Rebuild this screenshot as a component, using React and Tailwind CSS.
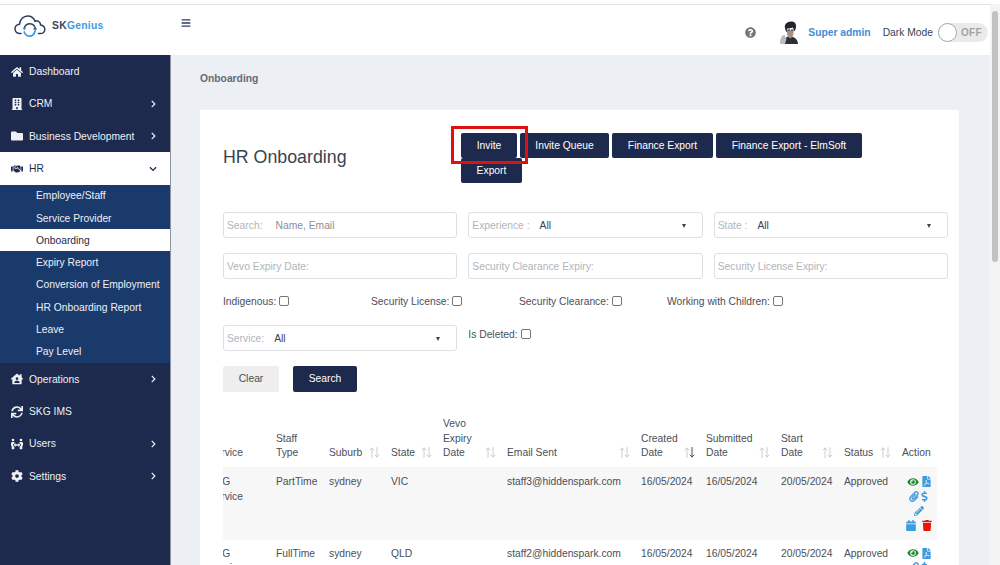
import {
  FaHome, FaBuilding, FaFolder, FaHandshake, FaHouseUser, FaSync, FaPeopleArrows, FaCog,
  FaChevronRight, FaChevronDown, FaBars, FaQuestionCircle, FaEye, FaFilePdf, FaPaperclip,
  FaDollarSign, FaPencilAlt, FaCalendar, FaTrash,
} from 'react-icons/fa';

const subItems = ['Employee/Staff', 'Service Provider', 'Onboarding', 'Expiry Report', 'Conversion of Employment', 'HR Onboarding Report', 'Leave', 'Pay Level'];

function Logo() {
  return (
    <svg width="32" height="24" viewBox="0 0 32 24" fill="none">
      <path d="M7 19.5H6C3 19.5 1 17.4 1 14.8C1 12.2 3 10.2 5.5 10.2C6 5.5 9.5 2 13.5 2C17 2 20 4.2 21 7.2C22 6.8 23.5 6.8 24.5 7.4C26 8.2 26.6 9.6 26.6 11C29 11.4 30.8 13 30.8 15.4C30.8 17.8 28.8 19.5 26.4 19.5H24.5" stroke="#2f3d5c" strokeWidth="1.5" strokeLinecap="round" />
      <path d="M10.5 13.5C11.5 11 13.6 9.8 15.8 9.8C17.8 9.8 19.6 10.8 20.6 12.6" stroke="#2f3d5c" strokeWidth="1.5" strokeLinecap="round" />
      <path d="M21.2 16.5C20.4 20 18.2 22.2 15.6 22.2C13.2 22.2 11.2 20.6 10.2 18" stroke="#3d9be0" strokeWidth="1.7" strokeLinecap="round" />
      <path d="M8.4 13.8H12.4L10.4 16.4Z" fill="#3d9be0" />
      <path d="M19 15.4H23.2L21.2 12.8Z" fill="#2f3d5c" />
    </svg>
  );
}

function Avatar() {
  return (
    <svg width="20" height="23" viewBox="0 0 20 23">
      <path d="M5 23C4.5 19 6.5 15.5 10.5 15.5C15 15.5 18.5 17.5 19 23Z" fill="#2b3036" />
      <path d="M1 22C0.5 20 2 16 3.5 14.5L5.5 14L7.5 18L6 23H2Z" fill="#b9bcbf" />
      <path d="M8 12C8 14 9 16.5 11 17.5C13 16.5 14.5 15 14.5 12V9H8Z" fill="#a88f80" />
      <path d="M6 7C5 3.5 8 0.5 12 0.5C15.5 0.5 17.5 2.5 17 6C16.8 8 16 9.5 15 10.5C15 8.5 14.5 7.5 13.5 6.5C11.5 7.5 9.5 7.5 8 7.5C8 9 7.8 10.5 8 11.5C7 10.5 6.3 8.8 6 7Z" fill="#23272d" />
      <path d="M8.5 9H11M12 9H14.5" stroke="#23272d" strokeWidth="1" />
    </svg>
  );
}

function SortIcon({ active }) {
  return (
    <svg width="11" height="11" viewBox="0 0 11 11" fill="none" className="flex-none mb-[3px] mr-[11px]" strokeWidth="1" strokeLinecap="round">
      <path d="M3 10.5V1M1 3L3 1L5 3" stroke="#c8ccd2" />
      <path d="M8 0.5V10M6 8L8 10L10 8" stroke={active ? '#4a4f59' : '#c8ccd2'} />
    </svg>
  );
}

function NavRow({ icon: Icon, label, arrow, active }) {
  return (
    <div className={`flex items-center h-[32.4px] pt-[1px] pl-[11px] pr-[13px] text-[10.3px] ${active ? 'bg-white text-[#1e2a4d]' : 'text-[#eef0f4]'}`}>
      <span className="w-[18px] flex-none"><Icon className="w-[12px] h-[12px]" /></span>
      <span className="flex-1">{label}</span>
      {arrow === 'right' && <FaChevronRight className="w-[7px] h-[8px]" />}
      {arrow === 'down' && <FaChevronDown className="w-[8px] h-[8px]" />}
    </div>
  );
}

function Sidebar() {
  return (
    <aside className="w-[171px] flex-none bg-[#1e2a4d] border-r border-[#8f94a0]">
      <NavRow icon={FaHome} label="Dashboard" />
      <NavRow icon={FaBuilding} label="CRM" arrow="right" />
      <NavRow icon={FaFolder} label="Business Development" arrow="right" />
      <NavRow icon={FaHandshake} label="HR" arrow="down" active />
      <div className="bg-[#1a3a6c]">
        {subItems.map((item) => (
          <div
            key={item}
            className={`h-[22.25px] pt-[1px] pl-[36px] flex items-center text-[10.3px] ${item === 'Onboarding' ? 'bg-white text-[#1e2a4d]' : 'text-[#eef0f4]'}`}
          >
            {item}
          </div>
        ))}
      </div>
      <NavRow icon={FaHouseUser} label="Operations" arrow="right" />
      <NavRow icon={FaSync} label="SKG IMS" />
      <NavRow icon={FaPeopleArrows} label="Users" arrow="right" />
      <NavRow icon={FaCog} label="Settings" arrow="right" />
    </aside>
  );
}

function Header() {
  return (
    <header className="h-[51px] flex-none bg-white border-t border-[#e4e4e4] mt-[4px] flex">
      <div className="flex-none w-[171px] pl-[14px] pt-[9px] flex items-start gap-[6px]">
        <Logo />
        <span className="text-[10.3px] font-bold tracking-[0.3px] mt-[4px] text-[#3d9be0]"><span className="text-[#3b4560]">SK</span>Genius</span>
      </div>
      <FaBars className="w-[10px] h-[10px] mt-[13px] ml-[10px] text-[#2f3d5c]" />
      <div className="flex-1 flex items-center justify-end pt-[5px] pr-[2px]">
        <FaQuestionCircle className="w-[11px] h-[11px] text-[#757575] mr-[23px]" />
        <Avatar />
        <span className="text-[10.3px] font-bold text-[#3d8fd6] ml-[9px]">Super admin</span>
        <span className="text-[10.3px] text-[#3b4252] ml-[12px]">Dark Mode</span>
        <div className="w-[50px] h-[19px] rounded-full bg-[#eaeaea] ml-[5px] flex items-center">
          <span className="w-[19px] h-[19px] rounded-full bg-white border border-[#a9a9a9] flex-none" />
          <span className="text-[10px] font-bold text-[#a3a3a3] ml-[4px] tracking-[0.3px]">OFF</span>
        </div>
      </div>
    </header>
  );
}

function Field({ label, value, caret, placeholder }) {
  return (
    <div className="h-[26px] border border-[#dcdfe4] rounded-[3px] bg-white flex items-center pt-[1px] pl-[3px] pr-[16px] text-[10.3px]">
      {label && <span className="text-[#b1b5bb]">{label}</span>}
      {value && <span className={placeholder ? 'ml-[13px] text-[#8a8f98]' : 'ml-[10px] text-[#3b4252]'}>{value}</span>}
      {caret && <span className="ml-auto w-0 h-0 border-x-[2.5px] border-x-transparent border-t-[4px] border-t-[#3b4252]" />}
    </div>
  );
}

function Check({ label, className = '' }) {
  return (
    <label className={`flex items-center gap-[3px] text-[10.3px] text-[#4a4f59] ${className}`}>
      {label}
      <span className="w-[10px] h-[10px] border border-[#777] rounded-[2px] bg-white -mt-[2px]" />
    </label>
  );
}

function Btn({ children, className = '' }) {
  return (
    <button className={`h-[25px] rounded-[2px] bg-[#1e2a4d] text-white text-[10.3px] ${className}`}>{children}</button>
  );
}

function SortHead({ children, active }) {
  return (
    <div className="flex items-end justify-between">
      <span>{children}</span>
      <SortIcon active={active} />
    </div>
  );
}

function Actions() {
  return (
    <div className="w-[33px] flex flex-col items-center gap-[3.5px] pt-[1px] pb-[9px] text-[#3d9be0]">
      <div className="flex gap-[3px] items-center h-[11px]">
        <FaEye className="w-[12px] h-[10px] text-[#168a2c]" />
        <FaFilePdf className="w-[9px] h-[11px]" />
      </div>
      <div className="flex gap-[2px] items-center h-[11px]">
        <FaPaperclip className="w-[10px] h-[11px]" />
        <FaDollarSign className="w-[7px] h-[11px]" />
      </div>
      <div className="flex items-center h-[11px]">
        <FaPencilAlt className="w-[10px] h-[10px]" />
      </div>
      <div className="flex gap-[6px] items-center h-[11px]">
        <FaCalendar className="w-[10px] h-[11px]" />
        <FaTrash className="w-[10px] h-[11px] text-[#e3170a]" />
      </div>
    </div>
  );
}

const rows = [
  { type: 'PartTime', state: 'VIC', email: 'staff3@hiddenspark.com', shaded: true },
  { type: 'FullTime', state: 'QLD', email: 'staff2@hiddenspark.com' },
];

function StaffTable() {
  return (
    <div className="mt-[25px] w-[714px] overflow-hidden">
      <table className="table-fixed border-collapse -ml-[14.4px] w-[728.4px] text-[10.3px] leading-[14.7px] text-[#4a4f59]">
        <colgroup>
          <col className="w-[67.4px]" />
          <col className="w-[53px]" />
          <col className="w-[62px]" />
          <col className="w-[52px]" />
          <col className="w-[64px]" />
          <col className="w-[134px]" />
          <col className="w-[65px]" />
          <col className="w-[75px]" />
          <col className="w-[63px]" />
          <col className="w-[58px]" />
          <col className="w-[35px]" />
        </colgroup>
        <thead>
          <tr className="align-bottom text-left">
            <th className="font-normal pb-[6px]">Service</th>
            <th className="font-normal pb-[6px]">Staff<br />Type</th>
            <th className="font-normal pb-[6px]"><SortHead>Suburb</SortHead></th>
            <th className="font-normal pb-[6px]"><SortHead>State</SortHead></th>
            <th className="font-normal pb-[6px]"><SortHead>Vevo<br />Expiry<br />Date</SortHead></th>
            <th className="font-normal pb-[6px]"><SortHead>Email Sent</SortHead></th>
            <th className="font-normal pb-[6px]"><SortHead active>Created<br />Date</SortHead></th>
            <th className="font-normal pb-[6px]"><SortHead>Submitted<br />Date</SortHead></th>
            <th className="font-normal pb-[6px]"><SortHead>Start<br />Date</SortHead></th>
            <th className="font-normal pb-[6px]"><SortHead>Status</SortHead></th>
            <th className="font-normal pb-[6px]">Action</th>
          </tr>
        </thead>
        <tbody>
          {rows.map((r) => (
            <tr key={r.email} className={`align-top ${r.shaded ? 'bg-[#f7f7f7] [&>td]:pt-[8px]' : '[&>td]:pt-[7px]'}`}>
              <td>SKG<br />Service</td>
              <td>{r.type}</td>
              <td>sydney</td>
              <td>{r.state}</td>
              <td></td>
              <td>{r.email}</td>
              <td>16/05/2024</td>
              <td>16/05/2024</td>
              <td>20/05/2024</td>
              <td>Approved</td>
              <td><Actions /></td>
            </tr>
          ))}
        </tbody>
      </table>
    </div>
  );
}

export default function App() {
  return (
    <div className="h-[565px] w-[1000px] overflow-hidden flex bg-white font-['Liberation_Sans',Arial,sans-serif]">
      <div className="w-[990px] flex-none flex flex-col">
        <Header />
        <div className="flex flex-1 min-h-0">
          <Sidebar />
          <main className="flex-1 bg-[#eceff4] pl-[29px] pr-[31px] min-w-0">
            <div className="h-[55px] pt-[16px] text-[10.3px] font-bold text-[#666b73]">Onboarding</div>
            <section className="bg-white h-[600px] pl-[23px] pr-[11px] pt-[23px]">
              <div className="flex items-start h-[79px]">
                <h1 className="w-[238px] pt-[13px] text-[17.8px] leading-[22px] text-[#3b4252]">HR Onboarding</h1>
                <div className="relative w-[420px] flex flex-wrap gap-x-[3px]">
                  <Btn className="w-[56px]">Invite</Btn>
                  <Btn className="w-[89px]">Invite Queue</Btn>
                  <Btn className="w-[101px]">Finance Export</Btn>
                  <Btn className="w-[146px]">Finance Export - ElmSoft</Btn>
                  <Btn className="w-[61px]">Export</Btn>
                  <span className="absolute -left-[10px] -top-[7px] w-[77px] h-[38px] border-[3px] border-[#e01010]" />
                </div>
              </div>
              <div className="grid grid-cols-3 gap-x-[11px] gap-y-[15px]">
                <Field label="Search:" value="Name, Email" placeholder />
                <Field label="Experience :" value="All" caret />
                <Field label="State :" value="All" caret />
                <Field label="Vevo Expiry Date:" />
                <Field label="Security Clearance Expiry:" />
                <Field label="Security License Expiry:" />
              </div>
              <div className="flex mt-[16px] h-[14px]">
                <Check label="Indigenous:" className="w-[148px]" />
                <Check label="Security License:" className="w-[148px]" />
                <Check label="Security Clearance:" className="w-[148px]" />
                <Check label="Working with Children:" />
              </div>
              <div className="grid grid-cols-3 gap-x-[11px] mt-[16px]">
                <Field label="Service:" value="All" caret />
                <Check label="Is Deleted:" className="self-start mt-[2px]" />
              </div>
              <div className="flex gap-[14px] mt-[15px]">
                <button className="h-[26px] w-[56px] rounded-[2px] bg-[#eeeeee] text-[10.3px] text-[#4a4f59]">Clear</button>
                <Btn className="w-[64px] h-[26px]">Search</Btn>
              </div>
              <StaffTable />
            </section>
          </main>
        </div>
      </div>
      <div className="w-[10px] flex-none bg-[#f4f4f4] pt-[7px] pl-[2px] mt-[4px]">
        <div className="w-[6px] h-[251px] rounded-full bg-[#c2c2c2]" />
      </div>
    </div>
  );
}
